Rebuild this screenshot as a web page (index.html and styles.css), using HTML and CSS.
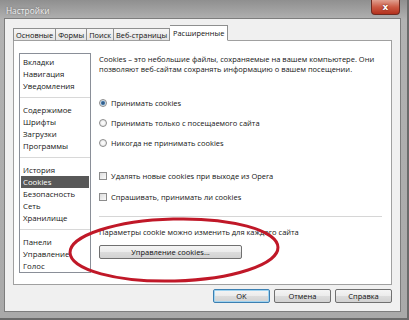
FILE: index.html
```html
<!DOCTYPE html>
<html>
<head>
  <title>Настройки</title>
  <link rel="stylesheet" href="styles.css">
</head>
<body>
  <div class="window">
    <div class="titlebar">
      <span class="title">Настройки</span>
      <span class="close">x</span>
    </div>

    <div class="client">
      <div class="tabs">
        <div class="tab">Основные</div>
        <div class="tab">Формы</div>
        <div class="tab">Поиск</div>
        <div class="tab">Веб-страницы</div>
        <div class="tab active">Расширенные</div>
      </div>

      <div class="panel">
        <div class="nav">
          <div class="nav-group">
            <div class="nav-item">Вкладки</div>
            <div class="nav-item">Навигация</div>
            <div class="nav-item">Уведомления</div>
          </div>
          <div class="nav-group">
            <div class="nav-item">Содержимое</div>
            <div class="nav-item">Шрифты</div>
            <div class="nav-item">Загрузки</div>
            <div class="nav-item">Программы</div>
          </div>
          <div class="nav-group">
            <div class="nav-item">История</div>
            <div class="nav-item selected">Cookies</div>
            <div class="nav-item">Безопасность</div>
            <div class="nav-item">Сеть</div>
            <div class="nav-item">Хранилище</div>
          </div>
          <div class="nav-group">
            <div class="nav-item">Панели</div>
            <div class="nav-item">Управление</div>
            <div class="nav-item">Голос</div>
          </div>
        </div>

        <div class="content">
          <p class="desc">Cookies – это небольшие файлы, сохраняемые на вашем компьютере. Они позволяют веб-сайтам сохранять информацию о вашем посещении.</p>

          <div class="options">
            <label class="option"><span class="radio checked"></span>Принимать cookies</label>
            <label class="option"><span class="radio"></span>Принимать только с посещаемого сайта</label>
            <label class="option"><span class="radio"></span>Никогда не принимать cookies</label>
          </div>

          <div class="checks">
            <label class="option"><span class="check"></span>Удалять новые cookies при выходе из Opera</label>
            <label class="option"><span class="check"></span>Спрашивать, принимать ли cookies</label>
          </div>

          <div class="site-settings">
            <p>Параметры cookie можно изменить для каждого сайта</p>
            <button class="btn manage">Управление cookies...</button>
          </div>
        </div>

        <!-- red marker drawn over the screenshot -->
        <svg class="highlight" width="220" height="76" viewBox="0 0 220 76">
          <ellipse cx="110" cy="38" rx="104" ry="31" fill="none" stroke="#c01828" stroke-width="3" transform="rotate(-1.5 110 38)"/>
        </svg>
      </div>

      <div class="actions">
        <button class="btn default">OK</button>
        <button class="btn">Отмена</button>
        <button class="btn">Справка</button>
      </div>
    </div>
  </div>
</body>
</html>
```

FILE: styles.css
```css
* {
  box-sizing: border-box;
}

body {
  margin: 0;
  padding: 0;
  font-family: "Open Sans", "Liberation Sans", sans-serif;
  font-size: 7.5px;
  color: #151515;
  background-color: #fff;
}

.window {
  width: 409px;
  height: 320px;
  display: flex;
  flex-direction: column;
  padding: 0 6px 6px 4px;
  background: linear-gradient(to bottom, #8f8f8f, #b2b2b2 20px, #a9a9a9);
  border-right: 2px solid #6a6a6a;
  border-bottom: 2px solid #6a6a6a;
}

.titlebar {
  height: 20px;
  display: flex;
  align-items: flex-start;
  justify-content: space-between;
}

.title {
  margin: 5px 0 0 2px;
  font-size: 8.3px;
  color: #f3f3f3;
  text-shadow: 0 0 2px rgba(0, 0, 0, 0.45);
}

.close {
  width: 29px;
  height: 15px;
  margin-right: 1px;
  display: flex;
  align-items: center;
  justify-content: center;
  font-family: "DejaVu Sans", sans-serif;
  font-weight: bold;
  font-size: 9px;
  color: #fff;
  text-shadow: 0 0 2px #5a1208;
  background: linear-gradient(to bottom, #e0a090, #cc5a44 50%, #b3301c);
  border: 1px solid #6e2a20;
  border-top: none;
  border-radius: 0 0 4px 4px;
}

.client {
  flex: 1;
  display: flex;
  flex-direction: column;
  padding: 7px 8px 8px 8px;
  background-color: #f0f0f0;
  border: 1px solid #7d7d7d;
}

/* Tabs */
.tabs {
  height: 15px;
  display: flex;
  align-items: flex-end;
  margin-bottom: -1px;
  position: relative;
  z-index: 1;
}

.tab {
  height: 13px;
  padding: 0 2px;
  line-height: 12px;
  font-size: 7.4px;
  color: #111;
  background: linear-gradient(to bottom, #f6f6f6, #e4e4e4);
  border: 1px solid #8e8f8f;
  border-right: none;
  border-bottom-color: #a0a0a0;
}

.tab:nth-child(4) {
  border-right: 1px solid #8e8f8f;
}

.tab.active {
  height: 16px;
  padding: 0 3px;
  line-height: 15px;
  background: #fff;
  border-right: 1px solid #8e8f8f;
  border-bottom-color: #fff;
  border-left: none;
}

/* Panel */
.panel {
  flex: 1;
  position: relative;
  display: flex;
  gap: 8px;
  padding: 12px 5px 11px 5px;
  background-color: #fff;
  border: 1px solid #a0a0a0;
}

.nav {
  width: 72px;
  border: 1px solid #8a8f98;
  background-color: #fff;
}

.nav-group {
  padding: 6px 1px 5px;
  border-bottom: 1px solid #d8d8d8;
}

.nav-group:first-child {
  padding-top: 2px;
}

.nav-group:last-child {
  padding-bottom: 0;
  border-bottom: none;
}

.nav-item {
  height: 12px;
  line-height: 12px;
  padding-left: 2px;
  font-size: 7.8px;
  white-space: nowrap;
}

.nav-item.selected {
  background-color: #585858;
  color: #fff;
}

.content {
  flex: 1;
  padding-top: 2px;
  padding-right: 4px;
}

.desc {
  margin: 0;
  line-height: 9.5px;
  padding-right: 6px;
}

.options {
  margin-top: 19px;
}

.checks {
  margin-top: 13px;
  padding-bottom: 9px;
  border-bottom: 1px solid #d6d6d6;
}

.checks .option {
  height: 20.5px;
}

.option {
  height: 20px;
  display: flex;
  align-items: center;
}

.radio {
  width: 8px;
  height: 8px;
  margin-right: 4px;
  border-radius: 50%;
  border: 1px solid #8c8c8c;
  background: radial-gradient(circle, #fff, #e2e2e2);
}

.radio.checked {
  background: radial-gradient(circle, #24456c 0, #4a7cab 1.6px, #d8e4ee 2.6px, #f4f4f4 4px);
}

.check {
  width: 8px;
  height: 8px;
  margin-right: 4px;
  border: 1px solid #8c8c8c;
  background: linear-gradient(to bottom right, #dcdcdc, #fafafa);
}

.site-settings p {
  margin: 10px 0 0;
  line-height: 10px;
}

.btn {
  height: 14px;
  padding: 0;
  font-family: inherit;
  font-size: 7.5px;
  color: #111;
  background: linear-gradient(to bottom, #f4f4f4, #ebebeb 50%, #dcdcdc 51%, #d2d2d2);
  border: 1px solid #707070;
  border-radius: 2px;
}

.manage {
  width: 143px;
  margin-top: 8px;
}

.highlight {
  position: absolute;
  left: 50px;
  top: 171px;
}

/* Bottom buttons */
.actions {
  margin-top: 4px;
  display: flex;
  justify-content: flex-end;
  gap: 4px;
}

.actions .btn {
  width: 57px;
}

.actions .default {
  border-color: #3c7fb1;
  box-shadow: inset 0 0 0 1px #9fd3f0;
}
```
